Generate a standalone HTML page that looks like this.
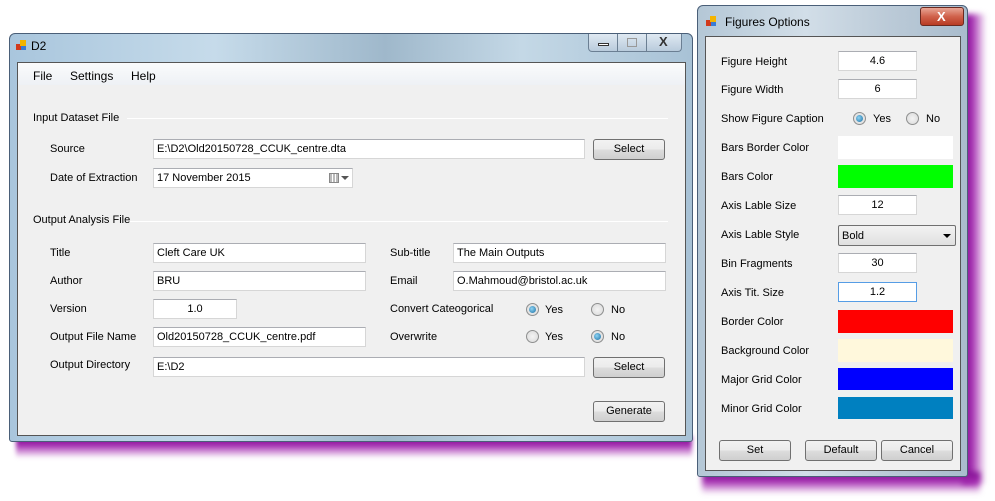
<!DOCTYPE html>
<html><head><meta charset="utf-8"><style>
*{margin:0;padding:0;box-sizing:border-box}
body{width:995px;height:501px;background:#fff;position:relative;overflow:hidden;font-family:"Liberation Sans",sans-serif;font-size:11px;color:#000}
div,span{position:absolute}
.t{white-space:nowrap;line-height:14px}
.tb{background:#fff;border:1px solid #d6d6d6;border-top-color:#abadb3;height:20px;padding:2px 3px;line-height:14px;white-space:nowrap}
.btn{border:1px solid #707070;border-radius:3px;background:linear-gradient(#f2f2f2,#ebebeb 50%,#dddddd 51%,#cfcfcf);text-align:center;line-height:18px;height:21px}
.r{width:13px;height:13px;border-radius:50%;border:1px solid #8e8f8f;background:radial-gradient(#f4f4f4,#d8d8d8)}
.r.on::after{content:"";position:absolute;left:2px;top:2px;width:7px;height:7px;border-radius:50%;background:radial-gradient(circle at 40% 40%,#8fd4f4,#1a6fa3)}
.sep{height:1px;background:#c8c8c8;border-bottom:1px solid #fff}
</style></head><body>
<!-- shadows -->
<div style="left:16px;top:436px;width:676px;height:22px;background:linear-gradient(#7a0a8c,#a32aaf 40%,rgba(200,120,210,0));filter:blur(2px)"></div>
<div style="left:962px;top:14px;width:24px;height:470px;background:linear-gradient(90deg,#7a0a8c,#a32aaf 40%,rgba(200,120,210,0));filter:blur(3px)"></div>
<div style="left:702px;top:472px;width:278px;height:22px;background:linear-gradient(#7a0a8c,#a32aaf 40%,rgba(200,120,210,0));filter:blur(3px)"></div>

<!-- main window -->
<div style="left:9px;top:33px;width:684px;height:409px;border:1px solid #4a5f78;border-radius:6px 6px 3px 3px;background:linear-gradient(90deg,#a9c6dd,#c6dbea 30%,#9fb8cb 55%,#c4d8e6 75%,#a8c2d6)">
 <div style="left:6px;top:6px;width:10px;height:10px">
  <span style="left:0;top:4px;width:5px;height:6px;background:#d23a1c"></span><span style="left:4px;top:0;width:6px;height:6px;background:#f4b400"></span><span style="left:5px;top:6px;width:5px;height:4px;background:#3a7bd5"></span></div>
 <div class="t" style="left:21px;top:5px;font-size:12px">D2</div>
 <div style="left:578px;top:0;width:94px;height:18px;border:1px solid #6b7f93;border-top:none;border-radius:0 0 4px 4px;background:linear-gradient(#dfe9f2,#b9cbdc)">
  <span style="left:9px;top:9px;width:11px;height:3px;border:1px solid #333;background:#fff"></span>
  <span style="left:28px;top:0;width:1px;height:17px;background:#6b7f93"></span>
  <span style="left:38px;top:4px;width:10px;height:9px;border:1px solid #999"></span>
  <span style="left:57px;top:0;width:1px;height:17px;background:#6b7f93"></span>
  <span class="t" style="left:70px;top:1px;font-weight:bold;color:#333;font-size:13px">X</span>
 </div>
 <div style="left:7px;top:28px;width:669px;height:374px;background:#f0f0f0;border:1px solid #555">
  <div style="left:0;top:0;width:667px;height:22px;background:linear-gradient(#fafbfc,#eef1f5)"></div>
  <div class="t" style="left:15px;top:6px;font-size:12px">File</div>
  <div class="t" style="left:52px;top:6px;font-size:12px">Settings</div>
  <div class="t" style="left:113px;top:6px;font-size:12px">Help</div>
 </div>
</div>
<div style="left:0;top:0">
 <div class="t" style="left:33px;top:111px">Input Dataset File</div>
 <div class="sep" style="left:127px;top:118px;width:541px"></div>
 <div class="t" style="left:50px;top:142px">Source</div>
 <div class="tb" style="left:153px;top:139px;width:432px">E:\D2\Old20150728_CCUK_centre.dta</div>
 <div class="btn" style="left:593px;top:139px;width:72px">Select</div>
 <div class="t" style="left:50px;top:171px">Date of Extraction</div>
 <div class="tb" style="left:153px;top:168px;width:200px">17 November 2015
  <span style="left:175px;top:4px;width:10px;height:10px;border:1px solid #888;background:repeating-linear-gradient(90deg,#bbb 0 2px,#fff 2px 3px)"></span>
  <span style="left:187px;top:7px;width:0;height:0;border-left:4px solid transparent;border-right:4px solid transparent;border-top:4px solid #555"></span></div>

 <div class="t" style="left:33px;top:213px">Output Analysis File</div>
 <div class="sep" style="left:130px;top:221px;width:538px"></div>

 <div class="t" style="left:50px;top:246px">Title</div>
 <div class="tb" style="left:153px;top:243px;width:213px">Cleft Care UK</div>
 <div class="t" style="left:390px;top:246px">Sub-title</div>
 <div class="tb" style="left:453px;top:243px;width:213px">The Main Outputs</div>

 <div class="t" style="left:50px;top:274px">Author</div>
 <div class="tb" style="left:153px;top:271px;width:213px">BRU</div>
 <div class="t" style="left:390px;top:274px">Email</div>
 <div class="tb" style="left:453px;top:271px;width:213px">O.Mahmoud@bristol.ac.uk</div>

 <div class="t" style="left:50px;top:302px">Version</div>
 <div class="tb" style="left:153px;top:299px;width:84px;text-align:center">1.0</div>
 <div class="t" style="left:390px;top:302px">Convert Cateogorical</div>
 <div class="r on" style="left:526px;top:303px"></div><div class="t" style="left:545px;top:303px">Yes</div>
 <div class="r" style="left:591px;top:303px"></div><div class="t" style="left:611px;top:303px">No</div>

 <div class="t" style="left:50px;top:330px">Output File Name</div>
 <div class="tb" style="left:153px;top:327px;width:213px">Old20150728_CCUK_centre.pdf</div>
 <div class="t" style="left:390px;top:330px">Overwrite</div>
 <div class="r" style="left:526px;top:330px"></div><div class="t" style="left:545px;top:330px">Yes</div>
 <div class="r on" style="left:591px;top:330px"></div><div class="t" style="left:611px;top:330px">No</div>

 <div class="t" style="left:50px;top:358px">Output Directory</div>
 <div class="tb" style="left:153px;top:357px;width:432px">E:\D2</div>
 <div class="btn" style="left:593px;top:357px;width:72px">Select</div>
 <div class="btn" style="left:593px;top:401px;width:72px">Generate</div>
</div>

<!-- figures window -->
<div style="left:697px;top:5px;width:271px;height:472px;border:1px solid #4a5f78;border-radius:6px 6px 3px 3px;background:linear-gradient(90deg,#b4c7d6,#d2dee8 40%,#bccbd8 70%,#a9bccd)">
 <div style="left:8px;top:10px;width:10px;height:10px">
  <span style="left:0;top:4px;width:5px;height:6px;background:#d23a1c"></span><span style="left:4px;top:0;width:6px;height:6px;background:#f4b400"></span><span style="left:5px;top:6px;width:5px;height:4px;background:#3a7bd5"></span></div>
 <div class="t" style="left:27px;top:9px;font-size:12px">Figures Options</div>
 <div style="left:222px;top:1px;width:44px;height:19px;border:1px solid #6b2a20;border-radius:3px;background:linear-gradient(#e8a595,#d0624c 50%,#b83c24)"><span class="t" style="left:16px;top:2px;color:#fff;font-weight:bold;font-size:13px">X</span></div>
 <div style="left:7px;top:30px;width:256px;height:435px;background:#f0f0f0;border:1px solid #555"></div>
</div>
<div style="left:0;top:0">
 <div class="t" style="left:721px;top:55px">Figure Height</div>
 <div class="tb" style="left:838px;top:51px;width:79px;text-align:center">4.6</div>
 <div class="t" style="left:721px;top:83px">Figure Width</div>
 <div class="tb" style="left:838px;top:79px;width:79px;text-align:center">6</div>
 <div class="t" style="left:721px;top:112px">Show Figure Caption</div>
 <div class="r on" style="left:853px;top:112px"></div><div class="t" style="left:873px;top:112px">Yes</div>
 <div class="r" style="left:906px;top:112px"></div><div class="t" style="left:926px;top:112px">No</div>
 <div class="t" style="left:721px;top:141px">Bars Border Color</div>
 <div style="left:838px;top:136px;width:115px;height:23px;background:#fff"></div>
 <div class="t" style="left:721px;top:170px">Bars Color</div>
 <div style="left:838px;top:165px;width:115px;height:23px;background:#00ff00"></div>
 <div class="t" style="left:721px;top:199px">Axis Lable Size</div>
 <div class="tb" style="left:838px;top:195px;width:79px;text-align:center">12</div>
 <div class="t" style="left:721px;top:228px">Axis Lable Style</div>
 <div style="left:838px;top:225px;width:118px;height:21px;border:1px solid #707070;border-radius:2px;background:linear-gradient(#f2f2f2,#e0e0e0)"><span class="t" style="left:3px;top:3px">Bold</span><span style="left:104px;top:8px;border-left:4px solid transparent;border-right:4px solid transparent;border-top:4px solid #000"></span></div>
 <div class="t" style="left:721px;top:257px">Bin Fragments</div>
 <div class="tb" style="left:838px;top:253px;width:79px;text-align:center">30</div>
 <div class="t" style="left:721px;top:286px">Axis Tit. Size</div>
 <div class="tb" style="left:838px;top:282px;width:79px;text-align:center;border-color:#569de5">1.2</div>
 <div class="t" style="left:721px;top:315px">Border Color</div>
 <div style="left:838px;top:310px;width:115px;height:23px;background:#ff0000"></div>
 <div class="t" style="left:721px;top:344px">Background Color</div>
 <div style="left:838px;top:339px;width:115px;height:23px;background:#fff8dc"></div>
 <div class="t" style="left:721px;top:373px">Major Grid Color</div>
 <div style="left:838px;top:368px;width:115px;height:22px;background:#0000ff"></div>
 <div class="t" style="left:721px;top:402px">Minor Grid Color</div>
 <div style="left:838px;top:397px;width:115px;height:22px;background:#0080c0"></div>
 <div class="btn" style="left:719px;top:440px;width:72px">Set</div>
 <div class="btn" style="left:805px;top:440px;width:72px">Default</div>
 <div class="btn" style="left:881px;top:440px;width:72px">Cancel</div>
</div>
</body></html>
